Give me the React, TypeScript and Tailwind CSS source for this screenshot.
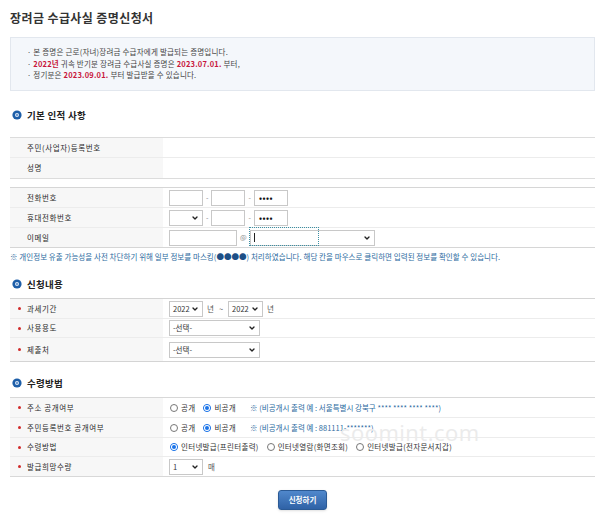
import { ChevronDown } from 'lucide-react';

const FONT = "font-['Noto_Sans_CJK_KR','Noto_Sans',sans-serif]";

function SectionTitle({ title }: { title: string }) {
  return (
    <div className="flex items-center gap-[5px] pl-[2px] h-[14px]">
      <svg width="10" height="10" viewBox="0 0 10 10">
        <circle cx="5" cy="5" r="4.6" fill="#1d5ea8" />
        <circle cx="5" cy="5" r="2" fill="#dce8f6" />
        <circle cx="5" cy="5" r="1" fill="#4f86c6" />
      </svg>
      <span className="text-[9.5px] font-bold text-[#222] tracking-[0.3px]">{title}</span>
    </div>
  );
}

function Row({
  label,
  required,
  h = 'h-[20px]',
  last,
  children,
}: {
  label: string;
  required?: boolean;
  h?: string;
  last?: boolean;
  children?: React.ReactNode;
}) {
  return (
    <div className={`flex ${h} ${last ? '' : 'border-b border-[#ececec]'}`}>
      <div className="w-[153px] bg-[#f7f7f7] flex items-center pl-[8px] gap-[6px]">
        <span className={`w-[3px] h-[3px] rounded-full ${required ? 'bg-[#d02a2a]' : 'bg-transparent'}`} />
        <span className="text-[7.5px] text-[#2a2a2a] tracking-[0.6px]">{label}</span>
      </div>
      <div className="flex-1 flex items-center pl-[6px] bg-white">{children}</div>
    </div>
  );
}

function Box({ w, children }: { w: string; children?: React.ReactNode }) {
  return (
    <div className={`${w} h-[16px] border border-[#c8c8c8] bg-white flex items-center px-[4px] text-[7.5px] text-[#333]`}>
      {children}
    </div>
  );
}

function Select({ w, value }: { w: string; value?: string }) {
  return (
    <div className={`${w} h-[16px] border border-[#c8c8c8] bg-white flex items-center justify-between pl-[3px] pr-[3px] text-[7.5px] text-[#333]`}>
      <span>{value}</span>
      <ChevronDown size={8} strokeWidth={4} className="text-[#222]" />
    </div>
  );
}

function Dash() {
  return <span className="mx-[3px] text-[7px] text-[#888]">-</span>;
}

function Radio({ checked, label }: { checked?: boolean; label: string }) {
  return (
    <span className="flex items-center gap-[3px] mr-[8px]">
      {checked ? (
        <span className="w-[8px] h-[8px] rounded-full bg-[#1a73e8] border border-[#1a73e8] flex items-center justify-center">
          <span className="w-[4px] h-[4px] rounded-full bg-[#1a73e8] ring-1 ring-white" />
        </span>
      ) : (
        <span className="w-[8px] h-[8px] rounded-full border border-[#777] bg-white" />
      )}
      <span className="text-[7.5px] text-[#333] tracking-[0.3px]">{label}</span>
    </span>
  );
}

const Dots = () => <span className="text-[8px] font-bold text-[#111] tracking-[0.5px]">••••</span>;

export default function App() {
  return (
    <div className={`w-[600px] h-[520px] bg-white relative overflow-hidden ${FONT}`}>
      <div className="ml-[10px] w-[585px] pt-[10px]">
        <h1 className="text-[12px] font-bold text-[#333] leading-[16px] tracking-[0.4px]">
          장려금 수급사실 증명신청서
        </h1>

        <div className="mt-[11px] h-[54px] bg-[#f4f7fb] border border-[#e2e7ee] pl-[16px] pt-[8px] text-[7.5px] text-[#444] leading-[11.5px] tracking-[0.2px]">
          <p>· 본 증명은 근로(자녀)장려금 수급자에게 발급되는 증명입니다.</p>
          <p>
            · <b className="text-[#c8173d]">2022년</b> 귀속 반기분 장려금 수급사실 증명은{' '}
            <b className="text-[#c8173d]">2023.07.01.</b> 부터,
          </p>
          <p>
            · 정기분은 <b className="text-[#c8173d]">2023.09.01.</b> 부터 발급받을 수 있습니다.
          </p>
        </div>

        <div className="mt-[17px]">
          <SectionTitle title="기본 인적 사항" />
        </div>

        <div className="mt-[15px] border-t border-b border-[#dcdcdc]">
          <Row label="주민(사업자)등록번호" />
          <Row label="성명" last />
        </div>

        <div className="mt-[8px] border-t border-b border-[#d6d6d6]">
          <Row label="전화번호">
            <Box w="w-[34px]" />
            <Dash />
            <Box w="w-[34px]" />
            <Dash />
            <Box w="w-[34px]">
              <Dots />
            </Box>
          </Row>
          <Row label="휴대전화번호">
            <Select w="w-[34px]" />
            <Dash />
            <Box w="w-[34px]" />
            <Dash />
            <Box w="w-[34px]">
              <Dots />
            </Box>
          </Row>
          <Row label="이메일" h="h-[19px]" last>
            <Box w="w-[68px]" />
            <span className="mx-[3px] text-[7px] text-[#888]">@</span>
            <div className="relative">
              <Select w="w-[125px]" />
              <div className="absolute left-[-1px] top-[-3px] w-[70px] h-[19px] border border-dotted border-[#3c8fa3]" />
              <span className="absolute left-[4px] top-[3px] w-px h-[9px] bg-[#222]" />
            </div>
          </Row>
        </div>

        <p className="mt-[3px] text-[7.5px] text-[#2c6aa0] leading-[11px] tracking-[0.05px] whitespace-nowrap">
          ※ 개인정보 유출 가능성을 사전 차단하기 위해 일부 정보를 마스킹(<span className="text-[#1d4f86]">●●●●</span>) 처리하였습니다. 해당 칸을 마우스로 클릭하면 입력된 정보를 확인할 수 있습니다.
        </p>

        <div className="mt-[15px]">
          <SectionTitle title="신청내용" />
        </div>

        <div className="mt-[7px] border-t border-b border-[#d4d4d4]">
          <Row label="과세기간" required>
            <Select w="w-[34px]" value="2022" />
            <span className="ml-[4px] text-[7.5px] text-[#555]">년</span>
            <span className="mx-[5px] text-[7.5px] text-[#555]">~</span>
            <Select w="w-[35px]" value="2022" />
            <span className="ml-[4px] text-[7.5px] text-[#555]">년</span>
          </Row>
          <Row label="사용용도" required h="h-[19px]">
            <Select w="w-[91px]" value="-선택-" />
          </Row>
          <Row label="제출처" required h="h-[23px]" last>
            <Select w="w-[91px]" value="-선택-" />
          </Row>
        </div>

        <div className="mt-[14px]">
          <SectionTitle title="수령방법" />
        </div>

        <div className="mt-[7px] border-t border-b border-[#d8d8d8]">
          <Row label="주소 공개여부" required>
            <span className="ml-[1px]" />
            <Radio label="공개" />
            <Radio checked label="비공개" />
            <span className="ml-[6px] text-[7.5px] text-[#2c6aa0]">
              ※ (비공개시 출력 예 : 서울특별시 강북구 **** **** **** ****)
            </span>
          </Row>
          <Row label="주민등록번호 공개여부" required>
            <span className="ml-[1px]" />
            <Radio label="공개" />
            <Radio checked label="비공개" />
            <span className="ml-[6px] text-[7.5px] text-[#2c6aa0]">※ (비공개시 출력 예 : 881111-*******)</span>
          </Row>
          <Row label="수령방법" required h="h-[19px]">
            <span className="ml-[1px]" />
            <Radio checked label="인터넷발급(프린터출력)" />
            <Radio label="인터넷열람(화면조회)" />
            <Radio label="인터넷발급(전자문서지갑)" />
          </Row>
          <Row label="발급희망수량" required h="h-[19px]" last>
            <Select w="w-[34px]" value="1" />
            <span className="ml-[5px] text-[7.5px] text-[#555]">매</span>
          </Row>
        </div>

        <div className="mt-[13px] flex justify-center">
          <button className="w-[49px] h-[20px] rounded-[3px] border border-[#2b5a95] bg-gradient-to-b from-[#5088cc] to-[#2f62a6] text-white text-[7.5px] font-bold shadow-sm">
            신청하기
          </button>
        </div>
      </div>

      <span className="absolute left-[340px] top-[416px] text-[22px] text-[#ebebeb] font-['Open_Sans',sans-serif] tracking-[0.5px] pointer-events-none select-none">
        soomint.com
      </span>
    </div>
  );
}
